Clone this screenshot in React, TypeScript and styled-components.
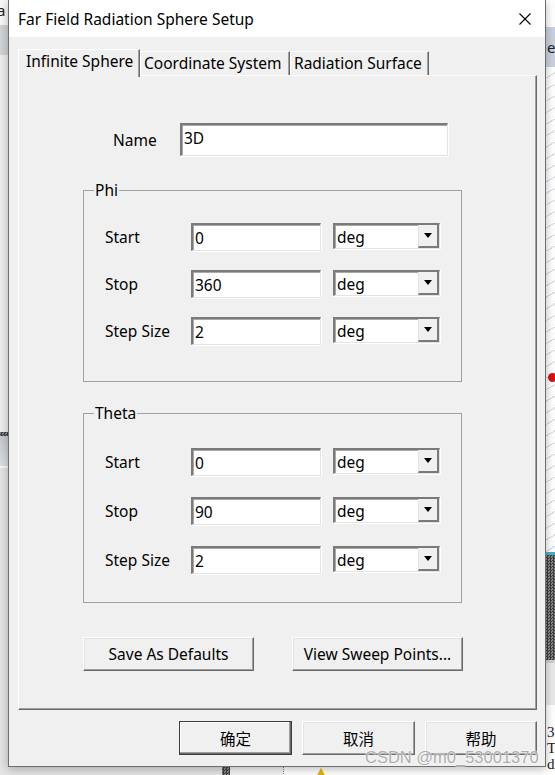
import React from "react";
import styled, { createGlobalStyle, css } from "styled-components";

const Global = createGlobalStyle`
  html, body { margin: 0; padding: 0; background: #e6e6e6; }
  body {
    width: 555px; height: 775px; overflow: hidden;
    font-family: "Noto Sans", "Noto Sans CJK SC", sans-serif;
    color: #000;
  }
  * { box-sizing: border-box; }
`;

const UI_FONT = `"Noto Sans", "Noto Sans CJK SC", sans-serif`;
const FS = 15.5;

const Screen = styled.div`
  position: relative;
  width: 555px;
  height: 775px;
  overflow: hidden;
  display: flex;
`;

const SideStrip = styled.div<{ $w: number }>`
  width: ${(p) => p.$w}px;
  flex: 0 0 auto;
  display: flex;
  flex-direction: column;
  overflow: hidden;
`;

const Band = styled.div<{ $h: number; $bg: string }>`
  height: ${(p) => p.$h}px;
  flex: 0 0 auto;
  background: ${(p) => p.$bg};
  overflow: hidden;
  position: relative;
`;

const BandText = styled.div<{ $pt: number; $ml: number; $serif?: boolean }>`
  padding-top: ${(p) => p.$pt}px;
  margin-left: ${(p) => p.$ml}px;
  font-family: ${(p) => (p.$serif ? `"Liberation Serif", serif` : UI_FONT)};
  font-size: 15px;
  line-height: 16px;
  color: #222;
`;

const RedDot = styled.div`
  position: absolute;
  left: 2px;
  top: 306px;
  width: 9px;
  height: 9px;
  border-radius: 50%;
  background: #e01010;
`;

const MiddleColumn = styled.div`
  width: 538px;
  flex: 0 0 auto;
  display: flex;
  flex-direction: column;
`;

const Window = styled.div`
  position: relative;
  z-index: 1;
  height: 767px;
  background: #f0f0f0;
  border: 1px solid #6e6e6e;
  border-top: none;
  box-shadow: 0 2px 9px rgba(0, 0, 0, 0.28);
  display: flex;
  flex-direction: column;
`;

const TitleBar = styled.div`
  height: 37px;
  background: #fff;
  display: flex;
  align-items: center;
  padding-left: 9px;
  padding-right: 14px;
  font-family: ${UI_FONT};
  font-size: ${FS}px;
`;

const TitleText = styled.div`
  flex: 1;
`;

const CloseIcon = styled.svg`
  width: 12px;
  height: 12px;
  display: block;
`;

const Body = styled.div`
  flex: 1;
  display: flex;
  flex-direction: column;
  padding: 12px 8px 0 9px;
`;

const TabStrip = styled.div`
  height: 26px;
  display: flex;
  align-items: flex-end;
  position: relative;
  z-index: 2;
`;

const Tab = styled.div<{ $w: number; $active?: boolean }>`
  width: ${(p) => p.$w}px;
  height: ${(p) => (p.$active ? 28 : 24)}px;
  margin-bottom: ${(p) => (p.$active ? -2 : 0)}px;
  flex: 0 0 auto;
  background: #f0f0f0;
  border-top: 1px solid #fff;
  border-left: 1px solid #fff;
  border-right: 1px solid #696969;
  box-shadow: inset -1px 0 0 #a0a0a0;
  font-family: ${UI_FONT};
  font-size: ${FS}px;
  line-height: 20px;
  white-space: nowrap;
  overflow: hidden;
  ${(p) =>
    p.$active
      ? css`
          padding: 1px 0 0 7px;
        `
      : css`
          padding: 1px 0 0 3px;
        `}
`;

const Panel = styled.div`
  width: 519px;
  height: 635px;
  background: #f0f0f0;
  border-top: 1px solid #fff;
  border-left: 1px solid #fff;
  border-right: 1px solid #696969;
  border-bottom: 1px solid #696969;
  box-shadow: inset -1px -1px 0 #a0a0a0;
  display: flex;
  flex-direction: column;
  padding: 47px 0 0 64px;
  font-family: ${UI_FONT};
  font-size: ${FS}px;
`;

const NameRow = styled.div`
  display: flex;
  align-items: center;
  padding-left: 30px;
  height: 33px;
`;

const NameLabel = styled.div`
  width: 67px;
`;

const sunken = css`
  background: #fff;
  border-top: 2px solid #7a7a7a;
  border-left: 2px solid #7a7a7a;
  border-bottom: 1px solid #e3e3e3;
  border-right: 1px solid #e3e3e3;
  box-shadow: inset 1px 1px 0 #a8a8a8, 0 1px 0 #fff, 1px 0 0 #fff;
`;

const TextField = styled.div<{ $w: number; $h: number; $top?: boolean }>`
  ${sunken}
  width: ${(p) => p.$w}px;
  height: ${(p) => p.$h}px;
  display: flex;
  align-items: ${(p) => (p.$top ? "flex-start" : "center")};
  padding: ${(p) => (p.$top ? "3px 2px 0" : "0 2px")};
  line-height: 20px;
`;

const Group = styled.div<{ $pt: number; $pb: number; $gap: number; $mt: number }>`
  position: relative;
  margin-top: ${(p) => p.$mt}px;
  width: 379px;
  border: 1px solid #a0a0a0;
  padding: ${(p) => p.$pt}px 0 ${(p) => p.$pb}px 21px;
  display: grid;
  grid-template-columns: 86px 130px 119px;
  grid-auto-rows: 28px;
  row-gap: ${(p) => p.$gap}px;
  align-items: center;
`;

const Legend = styled.div`
  position: absolute;
  left: 10px;
  top: -11px;
  padding: 0 1px;
  background: #f0f0f0;
  line-height: 20px;
`;

const RowLabel = styled.div`
  white-space: nowrap;
`;

const Combo = styled.div`
  ${sunken}
  margin-left: 12px;
  align-self: start;
  height: 26px;
  display: flex;
  align-items: stretch;
  line-height: 20px;
`;

const ComboText = styled.div`
  flex: 1;
  padding-left: 2px;
  display: flex;
  align-items: center;
`;

const ComboButton = styled.div`
  width: 21px;
  background: #f0f0f0;
  border-left: 1px solid #e3e3e3;
  border-right: 2px solid #7a7a7a;
  border-bottom: 2px solid #7a7a7a;
  display: flex;
  align-items: center;
  justify-content: center;
`;

const Arrow = styled.svg`
  width: 8px;
  height: 5px;
  display: block;
`;

const ActionRow = styled.div`
  margin-top: 34px;
  display: flex;
  gap: 38px;
`;

const raised = css`
  background: #f0f0f0;
  border-top: 1px solid #fff;
  border-left: 1px solid #fff;
  border-right: 1px solid #696969;
  border-bottom: 1px solid #696969;
  box-shadow: inset -1px -1px 0 #a0a0a0, inset 1px 1px 0 #e3e3e3;
`;

const PushButton = styled.div<{ $w: number; $default?: boolean }>`
  ${raised}
  width: ${(p) => p.$w}px;
  height: 34px;
  display: flex;
  align-items: center;
  justify-content: center;
  font-family: ${UI_FONT};
  font-size: ${FS}px;
  white-space: nowrap;
  ${(p) =>
    p.$default &&
    css`
      outline: 1px solid #3c3c3c;
      outline-offset: -1px;
      border-right-color: #3c3c3c;
      border-bottom-color: #3c3c3c;
      box-shadow: inset -1px -1px 0 #696969, inset -2px -2px 0 #a0a0a0,
        inset 1px 1px 0 #fff;
    `}
`;

const FooterRow = styled.div`
  margin-top: 11px;
  display: flex;
  justify-content: flex-end;
  gap: 10px;
`;

const BottomStrip = styled.div`
  height: 8px;
  display: flex;
  margin-left: -8px;
`;

const Piece = styled.div<{ $w: number; $bg: string }>`
  width: ${(p) => p.$w}px;
  flex: 0 0 auto;
  background: ${(p) => p.$bg};
  position: relative;
  overflow: hidden;
`;

const WarnIcon = styled.div`
  position: absolute;
  left: 32px;
  top: 1px;
  width: 0;
  height: 0;
  border-left: 5px solid transparent;
  border-right: 5px solid transparent;
  border-bottom: 9px solid #e8b400;
`;

const Watermark = styled.div`
  position: absolute;
  left: 365px;
  top: 747px;
  z-index: 5;
  font-family: "Liberation Sans", Arial, sans-serif;
  font-size: 16.5px;
  line-height: 20px;
  color: rgba(150, 150, 150, 0.8);
  text-shadow: 0 0 1px #fff, 0 0 2px rgba(255, 255, 255, 0.9);
  white-space: nowrap;
  pointer-events: none;
`;

const checker = `repeating-conic-gradient(#3e3e3e 0 25%, #8a8a8a 0 50%) 0 0 / 3px 3px`;
const hatch = `repeating-linear-gradient(150deg, #ffffff 0 9px, #d9d9e4 9px 10px)`;

type RowSpec = { label: string; value: string };

function ParamGroup({
  title,
  rows,
  pt,
  pb,
  gap,
  mt,
}: {
  title: string;
  rows: RowSpec[];
  pt: number;
  pb: number;
  gap: number;
  mt: number;
}) {
  return (
    <Group $pt={pt} $pb={pb} $gap={gap} $mt={mt}>
      <Legend>{title}</Legend>
      {rows.map((r) => (
        <React.Fragment key={r.label}>
          <RowLabel>{r.label}</RowLabel>
          <TextField $w={130} $h={28}>
            {r.value}
          </TextField>
          <Combo>
            <ComboText>deg</ComboText>
            <ComboButton>
              <Arrow viewBox="0 0 8 5">
                <polygon points="0,0 8,0 4,5" fill="#000" />
              </Arrow>
            </ComboButton>
          </Combo>
        </React.Fragment>
      ))}
    </Group>
  );
}

export default function App() {
  return (
    <>
      <Global />
      <Screen>
        <SideStrip $w={8}>
          <Band $h={25} $bg="#f8f8f8">
            <BandText $pt={2} $ml={-3}>
              a
            </BandText>
          </Band>
          <Band $h={30} $bg="#d0d3d7" />
          <Band $h={377} $bg="#eeeeee" />
          <Band $h={4} $bg={checker} />
          <Band $h={30} $bg="linear-gradient(#c4c8ce, #dcdee1)" />
          <Band $h={2} $bg="#fafafa" />
          <Band $h={307} $bg="#e4e4e4" />
        </SideStrip>

        <MiddleColumn>
          <Window>
            <TitleBar>
              <TitleText>Far Field Radiation Sphere Setup</TitleText>
              <CloseIcon viewBox="0 0 12 12">
                <path d="M0.5 0.5 L11.5 11.5 M11.5 0.5 L0.5 11.5" stroke="#000" strokeWidth="1.1" />
              </CloseIcon>
            </TitleBar>
            <Body>
              <TabStrip>
                <Tab $w={122} $active>
                  Infinite Sphere
                </Tab>
                <Tab $w={150}>Coordinate System</Tab>
                <Tab $w={139}>Radiation Surface</Tab>
              </TabStrip>
              <Panel>
                <NameRow>
                  <NameLabel>Name</NameLabel>
                  <TextField $w={268} $h={33} $top>
                    3D
                  </TextField>
                </NameRow>
                <ParamGroup
                  title="Phi"
                  mt={34}
                  pt={32}
                  pb={36}
                  gap={19}
                  rows={[
                    { label: "Start", value: "0" },
                    { label: "Stop", value: "360" },
                    { label: "Step Size", value: "2" },
                  ]}
                />
                <ParamGroup
                  title="Theta"
                  mt={31}
                  pt={34}
                  pb={28}
                  gap={21}
                  rows={[
                    { label: "Start", value: "0" },
                    { label: "Stop", value: "90" },
                    { label: "Step Size", value: "2" },
                  ]}
                />
                <ActionRow>
                  <PushButton $w={171}>Save As Defaults</PushButton>
                  <PushButton $w={171}>View Sweep Points...</PushButton>
                </ActionRow>
              </Panel>
              <FooterRow>
                <PushButton $w={113} $default>
                  确定
                </PushButton>
                <PushButton $w={113}>取消</PushButton>
                <PushButton $w={112}>帮助</PushButton>
              </FooterRow>
            </Body>
          </Window>
          <BottomStrip>
            <Piece $w={222} $bg="#e4e4e4" />
            <Piece $w={8} $bg={checker} />
            <Piece $w={53} $bg="#f4f4f4" />
            <Piece $w={1} $bg="repeating-linear-gradient(#777 0 1px, #fff 1px 2px)" />
            <Piece $w={270} $bg="#ffffff">
              <WarnIcon />
            </Piece>
          </BottomStrip>
        </MiddleColumn>

        <SideStrip $w={9}>
          <Band $h={27} $bg="#ffffff" />
          <Band $h={40} $bg="#c9d2de">
            <BandText $pt={12} $ml={1}>
              e
            </BandText>
          </Band>
          <Band $h={485} $bg={hatch}>
            <RedDot />
          </Band>
          <Band $h={3} $bg="#3fb4c9" />
          <Band $h={105} $bg={checker} />
          <Band $h={3} $bg="#cfcfcf" />
          <Band $h={42} $bg="#e9e9e9" />
          <Band $h={70} $bg="#ffffff">
            <BandText $pt={19} $ml={1} $serif>
              3<br />T<br />d
            </BandText>
          </Band>
        </SideStrip>

        <Watermark>CSDN @m0_53001370</Watermark>
      </Screen>
    </>
  );
}
